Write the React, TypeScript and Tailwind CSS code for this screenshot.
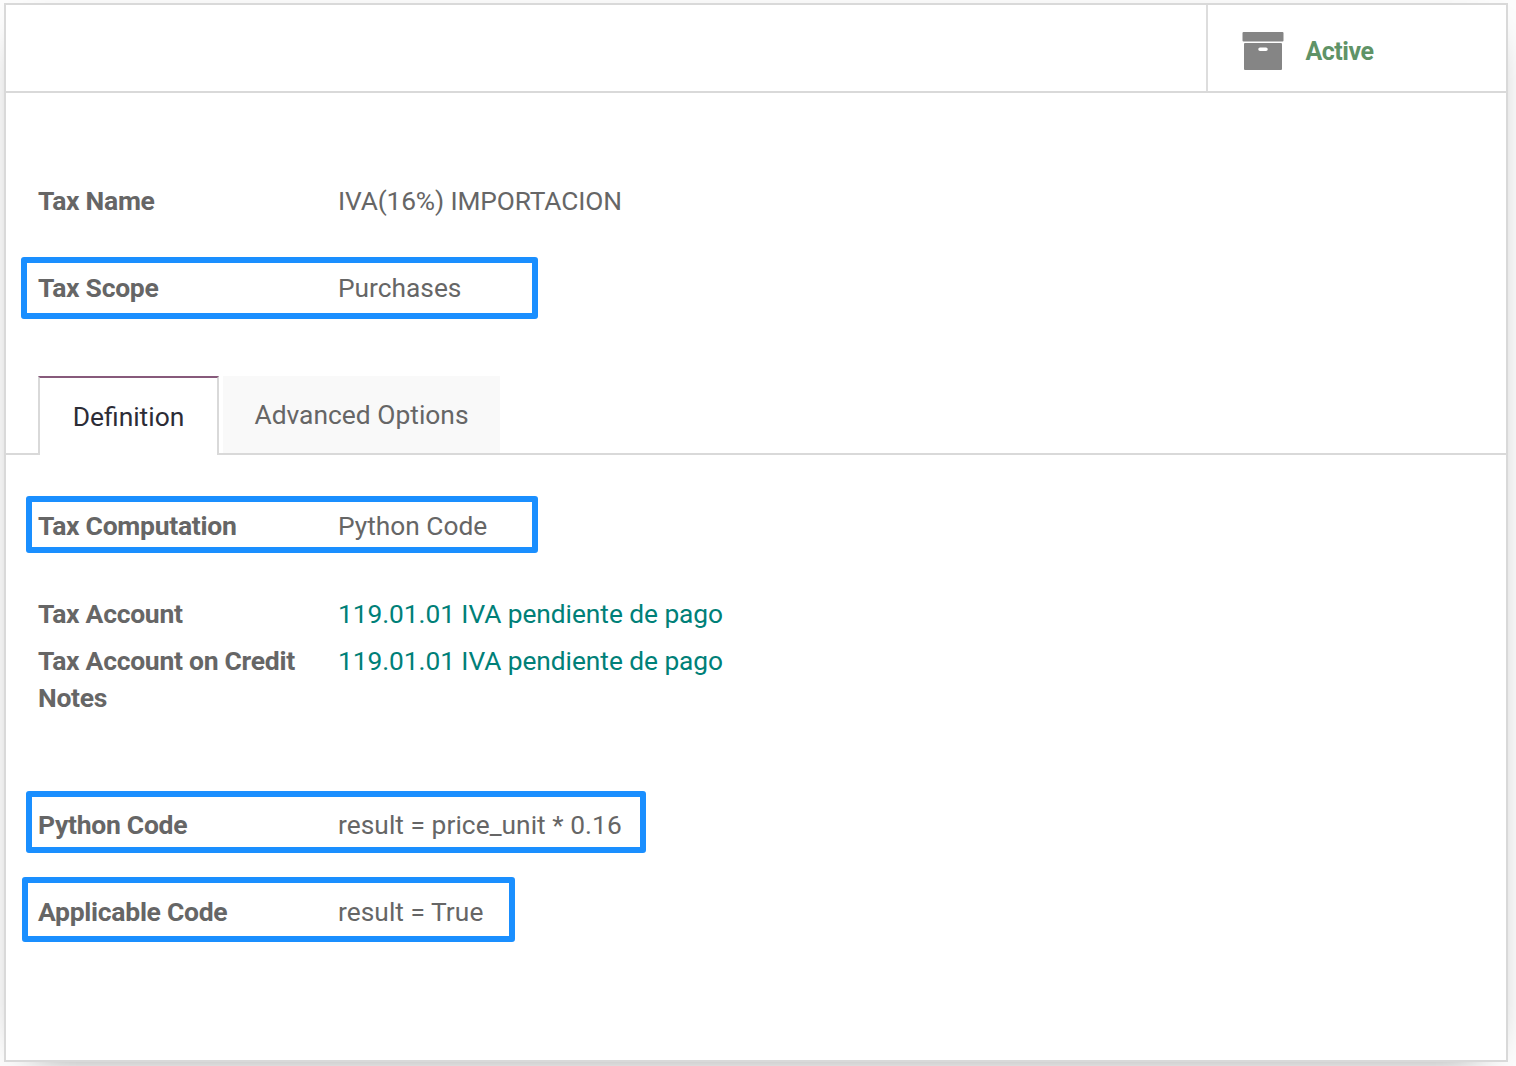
import React from "react";

type RowProps = { label: string; value: string; className: string; tracking?: string; link?: boolean };

function Row({ label, value, className, tracking = "", link }: RowProps) {
  return (
    <div className={`flex leading-[37px] ${className}`}>
      <div className="-mt-px mb-px w-[300px] shrink-0 pr-8 text-[26.5px] font-bold tracking-[-0.28px] text-[#666666]">{label}</div>
      <div className={`text-[26.3px] ${tracking} ${link ? "text-[#008078]" : "text-[#666666]"}`}>{value}</div>
    </div>
  );
}

const frame = "absolute rounded-[3px] border-[6px] border-[#1a8fff]";

export default function App() {
  return (
    <div className="h-[1066px] w-[1516px] overflow-hidden bg-[#fcfcfc] pt-[3px] pl-1 font-['Roboto',sans-serif] text-[26.4px]">
      <div className="relative h-[1059px] w-[1504px] border-2 border-[#d9d9d9] bg-white shadow-[0_10px_40px_-30px_#000]">
        <div className="flex h-[88px] justify-end border-b-2 border-[#d9d9d9]">
          <div className="flex w-[300px] items-center border-l-2 border-[#dddddd] pl-[34px]">
            <svg width="42" height="38" viewBox="0 0 42 38" className="mt-[5px] fill-[#858585]">
              <rect x="0.5" y="0" width="41" height="9.6" rx="1" />
              <path fillRule="evenodd" d="M3 11h36a1 1 0 0 1 1 1v25a1 1 0 0 1-1 1H3a1 1 0 0 1-1-1V12a1 1 0 0 1 1-1zM18 15.5a1.7 1.7 0 0 0 0 3.5h6a1.7 1.7 0 0 0 0-3.5z" />
            </svg>
            <span className="ml-[21.5px] mt-[7px] text-[25px] font-bold tracking-[-0.5px] text-[#5f9367]">Active</span>
          </div>
        </div>
        <div className="px-8">
          <Row className="pt-[90px]" label="Tax Name" value="IVA(16%) IMPORTACION" tracking="tracking-[-0.13px]" />
          <Row className="pt-[50px]" label="Tax Scope" value="Purchases" />
        </div>
        <div className="mt-[69px] flex h-[79px] items-start border-b-2 border-[#d9d9d9] pl-8">
          <div className="h-[79px] w-[181px] border-x-2 border-t-2 border-x-[#d9d9d9] border-t-[#875a7b] bg-white pt-[21px] text-center leading-[37px] text-[#2c2c36]">Definition</div>
          <div className="ml-1 h-[77px] w-[277px] bg-[#f9f9f9] pt-[21px] text-center leading-[37px] text-[#666666]">Advanced Options</div>
        </div>
        <div className="px-8">
          <Row className="pt-[53px]" label="Tax Computation" value="Python Code" />
          <Row className="pt-[51px]" label="Tax Account" value="119.01.01 IVA pendiente de pago" tracking="tracking-[-0.05px]" link />
          <Row className="pt-[10px]" label="Tax Account on Credit Notes" value="119.01.01 IVA pendiente de pago" tracking="tracking-[-0.05px]" link />
          <Row className="pt-[90px]" label="Python Code" value="result = price_unit * 0.16" tracking="tracking-[0.05px]" />
          <Row className="pt-[50px]" label="Applicable Code" value="result = True" tracking="tracking-[0.05px]" />
        </div>
        <div className={`${frame} left-[15px] top-[252px] h-[62px] w-[517px]`} />
        <div className={`${frame} left-[20px] top-[491px] h-[57px] w-[512px]`} />
        <div className={`${frame} left-[20px] top-[786px] h-[62px] w-[620px]`} />
        <div className={`${frame} left-[16px] top-[872px] h-[65px] w-[493px]`} />
      </div>
    </div>
  );
}
